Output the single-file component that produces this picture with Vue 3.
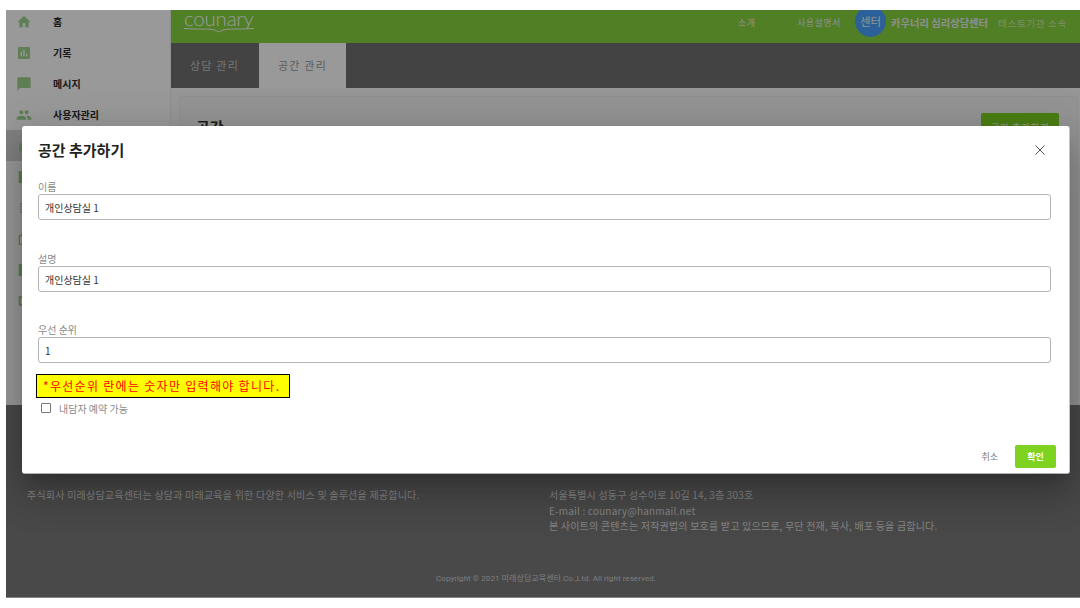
<script setup>
const topItems = [
  { label: '홈', path: 'M10 20v-6h4v6h5v-8h3L12 3 2 12h3v8z' },
  { label: '기록', path: 'M19 3H5c-1.1 0-2 .9-2 2v14c0 1.1.9 2 2 2h14c1.1 0 2-.9 2-2V5c0-1.1-.9-2-2-2zM9 17H7v-7h2v7zm4 0h-2V7h2v10zm4 0h-2v-4h2v4z' },
  { label: '메시지', path: 'M20 2H4c-1.1 0-2 .9-2 2v18l4-4h14c1.1 0 2-.9 2-2V4c0-1.1-.9-2-2-2z' },
  { label: '사용자관리', path: 'M16 11c1.66 0 2.99-1.34 2.99-3S17.66 5 16 5c-1.66 0-3 1.34-3 3s1.34 3 3 3zm-8 0c1.66 0 2.99-1.34 2.99-3S9.66 5 8 5C6.34 5 5 6.34 5 8s1.34 3 3 3zm0 2c-2.33 0-7 1.17-7 3.5V19h14v-2.5c0-2.33-4.67-3.5-7-3.5zm8 0c-.29 0-.62.02-.97.05 1.16.84 1.97 1.97 1.97 3.45V19h6v-2.5c0-2.33-4.67-3.5-7-3.5z' },
  { label: '', active: true, path: 'M12 2a4 4 0 0 1 4 4v2h3v12H5V8h3V6a4 4 0 0 1 4-4z' },
  { label: '', path: 'M4 3h16v18H4z' },
  { label: '', path: 'M6 5h12v2H6zm0 4h12v2H6zm0 4h12v2H6zm0 4h12v2H6z' },
  { label: '', path: 'M8 3h8v3h4v15H4V6h4zm-2 5v11h12V8z' },
  { label: '', path: 'M4 3h16v18H4z' },
  { label: '', path: 'M4 5h16v14H4zm3 3v8h10V8z' }
]
const fields = [
  { label: '이름', value: '개인상담실 1' },
  { label: '설명', value: '개인상담실 1' },
  { label: '우선 순위', value: '1' }
]
</script>

<template>
  <div class="frame">
    <div class="upper">
      <aside class="sidebar">
        <div v-for="(item, i) in topItems" :key="i" class="side-row" :class="{ active: item.active }">
          <svg class="side-icon" viewBox="0 0 24 24"><path :d="item.path" /></svg>
          <span class="side-label">{{ item.label }}</span>
        </div>
      </aside>
      <div class="main">
        <header class="topbar">
          <div class="logo">
            <span class="logo-word">counary</span>
            <svg class="logo-swoosh" viewBox="0 0 70 6"><path d="M0 1.5C14 2.5 26 1.5 31 3l4 2 4-2c5-1.5 17-.5 31-1.5" /></svg>
          </div>
          <nav class="topnav">
            <span class="nav-a">소개</span>
            <span class="nav-b">사용설명서</span>
          </nav>
          <div class="avatar-clip"><span class="avatar">센터</span></div>
          <strong class="org">카우너리 심리상담센터</strong>
          <span class="belong">테스트기관 소속</span>
        </header>
        <div class="tabs">
          <div class="tab">상담 관리</div>
          <div class="tab on">공간 관리</div>
        </div>
        <section class="content">
          <div class="card">
            <h2 class="card-title">공간</h2>
            <button class="add-btn">공간 추가하기</button>
          </div>
        </section>
      </div>
    </div>
    <footer class="footer">
      <div class="foot-cols">
        <p class="foot-left">주식회사 미래상담교육센터는 상담과 미래교육을 위한 다양한 서비스 및 솔루션을 제공합니다.</p>
        <p class="foot-right">서울특별시 성동구 성수이로 10길 14, 3층 303호<br />E-mail : counary@hanmail.net<br />본 사이트의 콘텐츠는 저작권법의 보호를 받고 있으므로, 무단 전재, 복사, 배포 등을 금합니다.</p>
      </div>
      <p class="copy">Copyright © 2021 미래상담교육센터 Co.,Ltd. All right reserved.</p>
    </footer>

    <div class="modal-layer">
      <div class="modal">
        <div class="modal-head">
          <h3 class="modal-title">공간 추가하기</h3>
          <svg class="close" viewBox="0 0 12 12"><path d="M1.5 1.5l9 9m0-9l-9 9" /></svg>
        </div>
        <div class="fields">
          <label v-for="f in fields" :key="f.label" class="field">
            <span class="field-label">{{ f.label }}</span>
            <input class="field-input" :value="f.value" />
          </label>
        </div>
        <div class="notice">*우선순위 란에는 숫자만 입력해야 합니다.</div>
        <label class="check">
          <input type="checkbox" class="check-box" />
          <span>내담자 예약 가능</span>
        </label>
        <div class="modal-foot">
          <button class="cancel">취소</button>
          <button class="ok">확인</button>
        </div>
      </div>
    </div>
  </div>
</template>

<style>
html, body { margin: 0; background: #fff; }
</style>

<style scoped>
* { box-sizing: border-box; }
.frame {
  position: relative;
  margin: 10px 0 0 6px;
  width: 1074px;
  height: 588px;
  display: flex;
  flex-direction: column;
  font-family: "Noto Sans CJK KR", "Noto Sans", sans-serif;
  background: #fff;
}
.upper { display: flex; height: 395px; flex: none; }
.sidebar {
  width: 165px;
  flex: none;
  background: #fff;
  border-right: 1px solid #eee;
  overflow: hidden;
}
.side-row {
  height: 31px;
  display: flex;
  align-items: center;
  padding-left: 10px;
  position: relative;
  top: -4px;
}
.side-row.active { background: #d6d6d6; }
.side-icon { width: 16px; height: 16px; fill: #9fd28c; flex: none; }
.side-label {
  margin-left: 21px;
  font-size: 10px;
  font-weight: 700;
  color: #2c2c2c;
}
.main { flex: 1; min-width: 0; display: flex; flex-direction: column; }
.topbar {
  height: 33px;
  flex: none;
  background: #85d43e;
  display: flex;
  align-items: center;
  padding: 0 0 8px 13px;
  color: #fff;
}
.logo { width: 70px; height: 25px; position: relative; flex: none; }
.logo-word {
  display: block;
  font-family: "Lato", sans-serif;
  font-weight: 300;
  font-size: 20.5px;
  letter-spacing: -0.2px;
  line-height: 16px;
  height: 16px;
  color: #fff;
}
.logo-swoosh { position: absolute; left: 0; top: 17px; width: 70px; height: 6px; fill: none; stroke: #f6f9f0; stroke-width: 1; }
.topnav { display: flex; margin-left: 484px; font-size: 9px; letter-spacing: .5px; color: #f0f0f0; }
.nav-a { width: 59px; }
.nav-b { width: 45px; white-space: nowrap; }
.avatar-clip {
  align-self: flex-start;
  width: 31px;
  height: 27px;
  margin-left: 13px;
  flex: none;
  overflow: hidden;
  display: flex;
  align-items: flex-end;
  border-radius: 0 0 16px 16px;
}
.avatar {
  width: 31px;
  height: 31px;
  flex: none;
  border-radius: 50%;
  background: #4aa0ff;
  text-align: center;
  font-size: 11.5px;
  line-height: 31px;
  color: #f4f4f4;
}
.org { margin-left: 5px; font-size: 10.3px; font-weight: 700; color: #eee; white-space: nowrap; }
.belong { margin-left: 10px; font-size: 9.6px; letter-spacing: .6px; color: #cdf0a8; white-space: nowrap; }
.tabs { height: 45px; flex: none; background: #717171; display: flex; }
.tab {
  width: 87px;
  margin-right: 1px;
  text-align: center;
  font-size: 11px;
  letter-spacing: 1.2px;
  line-height: 44px;
  color: #c4c4c4;
}
.tab.on { background: #fff; color: #9a9a9a; }
.content { flex: 1; min-height: 0; overflow: hidden; background: #fbfbfb; padding: 8px 2px 0 8px; }
.card {
  height: 320px;
  background: #f7f7f7;
  border: 1px solid #eee;
  border-radius: 3px;
  padding: 16px 18px 0 16px;
  display: flex;
  justify-content: space-between;
  align-items: flex-start;
}
.card-title { margin: 3px 0 0; font-size: 15px; font-weight: 700; color: #333; }
.add-btn {
  width: 78px;
  height: 27px;
  border: 0;
  border-radius: 2px;
  background: #7ed321;
  color: #fff;
  font: inherit;
  font-size: 9.5px;
  letter-spacing: .6px;
}
.footer {
  flex: 1;
  background: #7b7b7b;
  color: #dcdcdc;
  padding: 82px 0 0 21px;
  border-bottom: 1px solid #ddd;
}
.foot-cols { display: flex; }
.foot-left { width: 522px; flex: none; margin: 0; font-size: 10px; line-height: 15.5px; letter-spacing: .22px; }
.foot-right { margin: 0; font-size: 10px; line-height: 15.5px; letter-spacing: .19px; }
.copy {
  margin: 38px 0 0 -21px;
  text-align: center;
  font-family: Roboto, "Noto Sans CJK KR", sans-serif;
  font-size: 8px;
  letter-spacing: .07px;
  padding-left: 6px;
  color: #cfcfcf;
}
.modal-layer {
  position: absolute;
  inset: 0;
  overflow: hidden;
  background: rgba(0, 0, 0, .4);
  padding: 116px 0 0 16px;
}
.modal {
  width: 1048px;
  height: 348px;
  background: #fff;
  border-radius: 3px;
  border-right: 1px solid #c4c4c4;
  border-bottom: 1px solid #b0b0b0;
  box-shadow: 0 11px 15px -7px rgba(0, 0, 0, .2), 0 24px 38px 3px rgba(0, 0, 0, .14), 0 9px 46px 8px rgba(0, 0, 0, .12);
  padding: 0 18px 0 16px;
  display: flex;
  flex-direction: column;
}
.modal-head { height: 54px; flex: none; display: flex; justify-content: space-between; align-items: center; padding-bottom: 7px; }
.modal-title { margin: 0; font-size: 15px; font-weight: 700; color: #222; }
.close { width: 12px; height: 12px; fill: none; stroke: #555; stroke-width: 1; margin-right: 5px; }
.fields { display: flex; flex-direction: column; }
.field { display: block; height: 72px; }
.field:nth-child(2) { height: 71px; }
.field-label { display: block; font-size: 10px; line-height: 14px; color: #8a8a8a; }
.field-input {
  display: block;
  width: 100%;
  height: 26px;
  border: 1px solid #b4b4b4;
  border-radius: 3px;
  padding: 0 6px;
  outline: 0;
  font: inherit;
  font-size: 10px;
  color: #333;
  background: #fff;
}
.notice {
  align-self: flex-start;
  margin: -21px 0 0 -2px;
  width: 254px;
  height: 24px;
  border: 1px solid #000;
  background: #ff0;
  color: #f00;
  font-size: 12px;
  line-height: 21px;
  padding-left: 6px;
  letter-spacing: 1.3px;
  white-space: nowrap;
}
.check { display: flex; align-items: center; margin: 3px 0 0 3px; font-size: 10px; color: #8a8a8a; height: 14px; }
.check-box {
  appearance: none;
  width: 10px;
  height: 10px;
  margin: 0 8px 0 0;
  border: 1px solid #777;
  border-radius: 1px;
  background: #fff;
}
.modal-foot { margin: auto -5px 0 0; padding: 0 0 5px; display: flex; justify-content: flex-end; align-items: center; }
.cancel { border: 0; background: none; font: inherit; font-size: 9px; color: #777; padding: 0; margin-right: 17px; }
.ok {
  width: 41px;
  height: 23px;
  border: 0;
  border-radius: 2px;
  background: #7ed321;
  color: #fff;
  font: inherit;
  font-size: 9px;
  font-weight: 700;
  padding: 0;
}
</style>
